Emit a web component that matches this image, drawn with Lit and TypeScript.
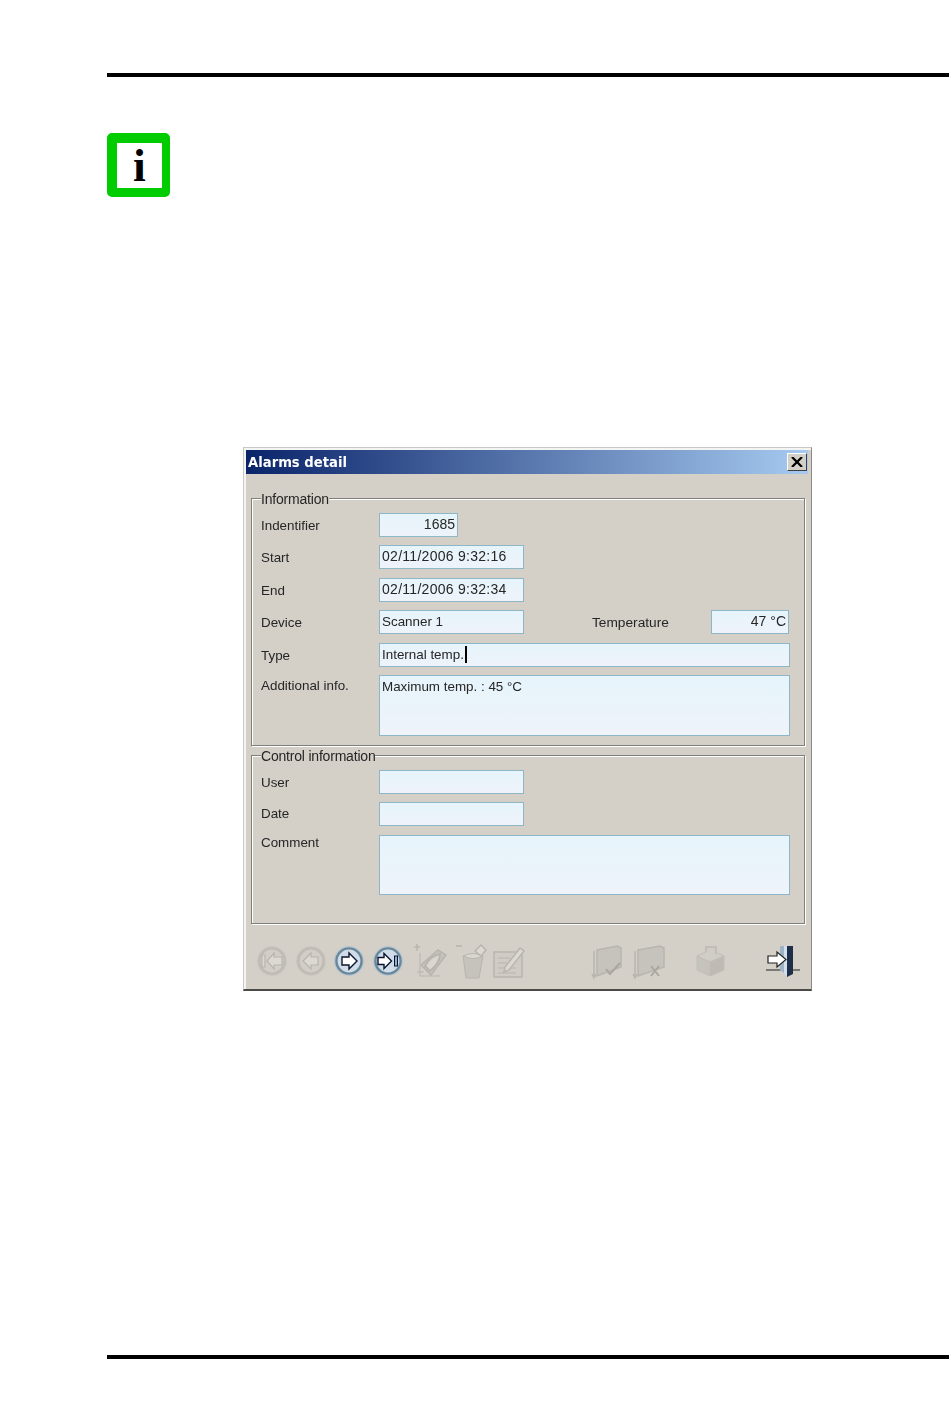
import { LitElement, html, css, svg } from "lit";
import { customElement } from "lit/decorators.js";

const navIcon = (on: boolean, arrow: string) => html`<svg class="nav" viewBox="0 0 30 30" width="30" height="30">
  <circle cx="15" cy="15" r="14.4" fill="none" stroke="${on ? "#b4c6d2" : "#cac6bf"}" stroke-width="1.2"></circle>
  <circle cx="15" cy="15" r="12.6" fill="${on ? "#d0dde8" : "#d2cec6"}" stroke="${on ? "#69879a" : "#bfbbb4"}" stroke-width="2.4"></circle>
  <path d="${arrow}" fill="${on ? "#fff" : "#dcd9d2"}" stroke="${on ? "#0c1530" : "#b8b4ad"}" stroke-width="${on ? 1.4 : 1.2}" stroke-linejoin="miter"></path>
  ${on && arrow.includes("M22") ? svg`<rect x="21.5" y="10" width="3" height="10" fill="#8fb0d0" stroke="#0c1530"></rect>` : ""}
</svg>`;

const G = "#b9b5ae", L = "#c6c3bc";

@customElement("app-root")
export class AppRoot extends LitElement {
  static styles = css`
    :host { display: block; }
    .page { width: 950px; height: 1408px; background: #fff; box-sizing: border-box; padding: 73px 1px 49px 107px; display: flex; flex-direction: column; }
    .rule { height: 4px; background: #000; flex: none; }
    .info { margin-top: 56px; width: 63px; height: 64px; box-sizing: border-box; border-style: solid; border-color: #00cc00; border-width: 10px 8px 9px 10px; border-radius: 5px; background: #fff; display: flex; align-items: center; justify-content: center; font: bold 46px/44px "Liberation Serif", serif; color: #000; flex: none; padding-top: 1px; }
    .dialog { margin: 250px 0 0 136px; width: 569px; height: 544px; box-sizing: border-box; flex: none; background: #d4d0c8; border: 1px solid #c8c8c8; border-right-color: #8a8a86; border-bottom: 2px solid #4a4a48; box-shadow: inset 2px 2px 0 #f4f4f2; padding: 2px 3px 0 2px; display: flex; flex-direction: column; font: 13.4px/17px "Liberation Sans", Arial, sans-serif; color: #262626; filter: blur(0.35px); }
    .title { height: 24px; flex: none; background: linear-gradient(90deg, #0a246a, #a6caf0); display: flex; align-items: center; justify-content: space-between; padding: 0 1px 0 2px; color: #fff; font: bold 13.2px "DejaVu Sans", sans-serif; }
    .close { width: 20px; height: 18px; box-sizing: border-box; background: #d4d0c8; border: 1px solid; border-color: #fff #404040 #404040 #fff; display: flex; align-items: center; justify-content: center; }
    .body { padding: 15px 0 0 5px; }
    fieldset { margin: 0; padding: 5px 0 0 9px; width: 554px; box-sizing: border-box; border: 1px solid #7f7f7b; box-shadow: inset 1px 1px 0 #fff, 1px 1px 0 #fff; display: block; min-width: 0; }
    fieldset.a { height: 257px; position: relative; z-index: 1; }
    fieldset.b { height: 178px; }
    legend { padding: 2px 0 0; margin: 0; background: #d4d0c8; line-height: 17px; font-size: 14px; letter-spacing: -0.2px; }
    .rows { display: flex; flex-direction: column; gap: 8.4px; }
    .row { display: flex; align-items: center; }
    .row.top { align-items: flex-start; }
    .lab { width: 118px; flex: none; }
    .lab.low { padding-top: 2px; }
    .lab.add { padding-top: 2px; }
    .lab.comment { margin-top: -1px; }
    .lab.date-lab { padding-bottom: 2px; }
    .tf { height: 24px; box-sizing: border-box; border: 1px solid #8db6c6; background: linear-gradient(180deg, #e6f4fb, #eff3fa); padding: 2px 2px 0 2px; white-space: pre; }
    .short { width: 79px; text-align: right; font-size: 14px; }
    .mid { width: 145px; }
    .date { letter-spacing: 0.28px; font-size: 14px; }
    .wide { width: 411px; }
    .area { width: 411px; height: 61px; }
    .tall { height: 60px; }
    .temp-lab { margin-left: 68px; width: 119px; flex: none; font-size: 13.7px; }
    .temp { width: 78px; text-align: right; font-size: 14px; }
    .caret { display: inline-block; width: 2px; height: 17px; background: #000; vertical-align: top; margin-left: 1px; }
    .tools { display: flex; align-items: center; padding: 19px 0 0 11px; }
    .tools svg { display: block; flex: none; }
    .nav { margin-right: 8.67px; }
    .g1 { margin-left: 2px; }
    .g2 { margin-left: 7px; }
    .g3 { margin-left: 3px; }
    .g4 { margin-left: 65px; }
    .g5 { margin-left: 27px; }
    .g6 { margin-left: 38px; }
    .spacer { flex: 1 1 auto; }
  `;

  render() {
    const right = "M8 11 H15 V7 L23 15 L15 23 V19 H8 Z";
    const left = "M22 11 H15 V7 L7 15 L15 23 V19 H22 Z";
    const rightEnd = "M5 11.5 H11 V7.5 L18.5 15 L11 22.5 V18.5 H5 Z M22 10";
    const leftEnd = "M25 11 H17 V7 L10 15 L17 23 V19 H25 Z M5 9 H8 V21 H5 Z";
    return html`<div class="page">
      <div class="rule"></div>
      <div class="info">i</div>
      <div class="dialog">
        <div class="title"><span>Alarms detail</span>
          <span class="close"><svg viewBox="0 0 12 10" width="12" height="10"><path d="M1 0 L11 10 M11 0 L1 10" stroke="#000" stroke-width="2.2"></path></svg></span>
        </div>
        <div class="body">
          <fieldset class="a">
            <legend>Information</legend>
            <div class="rows">
              <div class="row"><span class="lab">Indentifier</span><span class="tf short">1685</span></div>
              <div class="row"><span class="lab">Start</span><span class="tf mid date">02/11/2006 9:32:16</span></div>
              <div class="row"><span class="lab low">End</span><span class="tf mid date">02/11/2006 9:32:34</span></div>
              <div class="row"><span class="lab">Device</span><span class="tf mid">Scanner 1</span><span class="temp-lab">Temperature</span><span class="tf temp">47 °C</span></div>
              <div class="row"><span class="lab low">Type</span><span class="tf wide">Internal temp.<span class="caret"></span></span></div>
              <div class="row top"><span class="lab add">Additional info.</span><span class="tf area">Maximum temp. : 45 °C</span></div>
            </div>
          </fieldset>
          <fieldset class="b">
            <legend>Control information</legend>
            <div class="rows">
              <div class="row"><span class="lab">User</span><span class="tf mid"></span></div>
              <div class="row"><span class="lab date-lab">Date</span><span class="tf mid"></span></div>
              <div class="row top"><span class="lab comment">Comment</span><span class="tf area tall"></span></div>
            </div>
          </fieldset>
        </div>
        <div class="tools">
          ${navIcon(false, leftEnd)}
          ${navIcon(false, left)}
          ${navIcon(true, right)}
          ${navIcon(true, rightEnd)}
          <svg class="g1" viewBox="0 0 34 36" width="34" height="36" fill="none" stroke="${G}">
            <path d="M3 1 V8 M0 4 H6" stroke-width="1.5"></path>
            <path d="M7 22 L24 7 L32 12 L17 32 Z" fill="${L}" stroke-width="1.5"></path>
            <path d="M11 23 Q16 13 26 11 Q26 20 16 28 Z" fill="#dad7d0" stroke-width="2"></path>
            <path d="M6 10 V33 H26 M3 29 H10"></path>
          </svg>
          <svg class="g2" viewBox="0 0 34 36" width="34" height="36" fill="none" stroke="${G}">
            <path d="M1 3 H7" stroke-width="1.5"></path>
            <path d="M8 13 L11 35 H24 L28 13 Z" fill="${L}"></path>
            <path d="M8 13 Q18 8 28 13 Q18 18 8 13 Z" fill="#dad7d0"></path>
            <path d="M20 8 L26 2 L31 7 L26 13 Z" fill="#dcd9d2" stroke-width="1.5"></path>
          </svg>
          <svg class="g3" viewBox="0 0 34 36" width="34" height="36" fill="none" stroke="${G}">
            <rect x="2" y="9" width="28" height="25" fill="#d0ccc5" stroke-width="1.5"></rect>
            <path d="M6 15 H18 M6 20 H15 M6 25 H24 M6 30 H24"></path>
            <path d="M13 24 L28 5 L32 8 L17 27 L12 29 Z" fill="#dcd9d2" stroke-width="1.5"></path>
          </svg>
          <svg class="g4" viewBox="0 0 34 36" width="34" height="36" fill="none" stroke="${G}">
            <path d="M6 7 L26 3 L30 5 L30 24 L6 33 Z" fill="${L}" stroke-width="1.5"></path>
            <path d="M3 8 V34 M1 31 L3 35 L5 31" stroke-width="1.5"></path>
            <path d="M15 26 L19 31 L29 20" stroke="#aaa69f" stroke-width="2"></path>
          </svg>
          <svg class="g2" viewBox="0 0 34 36" width="34" height="36" fill="none" stroke="${G}">
            <path d="M6 7 L28 3 L32 5 L32 24 L6 33 Z" fill="${L}" stroke-width="1.5"></path>
            <path d="M3 8 V34 M1 31 L3 35 L5 31" stroke-width="1.5"></path>
            <path d="M19 23 L27 33 M27 23 L19 33" stroke="#aaa69f" stroke-width="2"></path>
          </svg>
          <svg class="g5" viewBox="0 0 34 36" width="34" height="36" fill="none" stroke="#c2beb7">
            <path d="M4 13 L17 19 L17 33 L4 27 Z" fill="#c6c3bc"></path>
            <path d="M17 19 L31 13 L31 27 L17 33 Z" fill="#bfbbb4"></path>
            <path d="M4 13 L17 7 L31 13 L17 19 Z" fill="#d0cdc6"></path>
            <path d="M13 9 V4 H23 V11" fill="#d0cdc6" stroke-width="2"></path>
          </svg>
          <svg class="g6" viewBox="0 0 36 36" width="36" height="36">
            <path d="M1 27 H35" stroke="#222" fill="none"></path>
            <path d="M15 3 H23 V34 L15 27 Z" fill="#d2e0ee"></path>
            <path d="M15 3 L19 3 L19 30 L15 27 Z" fill="#9fb3c8"></path>
            <path d="M22 3 H28 V31 L22 34 Z" fill="#1f2f4a"></path>
            <path d="M3 13 H12 V9 L21 16.5 L12 24 V20 H3 Z" fill="#fff" stroke="#222" stroke-width="1.2"></path>
          </svg>
        </div>
      </div>
      <div class="spacer"></div>
      <div class="rule"></div>
    </div>`;
  }
}
